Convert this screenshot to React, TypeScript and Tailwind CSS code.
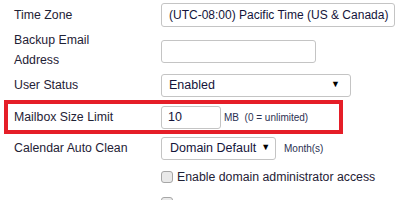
export default function App() {
  const font = { fontFamily: '"Liberation Sans", Arial, sans-serif' };
  return (
    <div style={font} className="w-[400px] h-[200px] overflow-hidden bg-white text-[12.3px] text-[#1f2236]">
      {/* Time Zone */}
      <div className="flex h-[30px] items-center pl-[14px]">
        <div className="w-[147px] shrink-0">Time Zone</div>
        <div className="flex h-[24px] w-[234px] shrink-0 items-center rounded-[3px] border border-[#c4c4c4] pl-[7px] text-[12px] text-[#14143a]">
          (UTC-08:00) Pacific Time (US &amp; Canada)
        </div>
      </div>

      {/* Backup Email */}
      <div className="flex h-[40px] items-center pl-[14px]">
        <div className="w-[147px] shrink-0 leading-[20px]">
          Backup Email
          <br />
          Address
        </div>
        <div className="mt-[2px] h-[23px] w-[155px] shrink-0 rounded-[3px] border border-[#c4c4c4]" />
      </div>

      {/* User Status */}
      <div className="flex h-[30px] items-center pl-[14px]">
        <div className="w-[147px] shrink-0">User Status</div>
        <div className="flex h-[23px] w-[190px] shrink-0 items-center justify-between rounded-[3px] border border-[#c4c4c4] pl-[7px] pr-[10px] text-[12.5px] text-[#14143a]">
          <span>Enabled</span>
          <span className="text-[9px] text-black">▼</span>
        </div>
      </div>

      {/* Mailbox Size Limit - highlighted */}
      <div className="ml-[4px] flex h-[34px] w-[339px] items-center border-4 border-[#e51e28] pl-[6px]">
        <div className="w-[147px] shrink-0">Mailbox Size Limit</div>
        <div className="flex h-[23px] w-[60px] shrink-0 items-center rounded-[3px] border border-[#c4c4c4] pl-[6px] text-[12.5px] text-[#14143a]">
          10
        </div>
        <span className="ml-[3px] whitespace-pre text-[10px] text-[#2b3152]">MB  (0 = unlimited)</span>
      </div>

      {/* Calendar Auto Clean */}
      <div className="flex h-[28px] items-center pl-[14px]">
        <div className="w-[147px] shrink-0">Calendar Auto Clean</div>
        <div className="flex h-[23px] w-[115px] shrink-0 items-center rounded-[3px] border border-[#c4c4c4] pl-[8px] text-[12.5px] text-[#14143a]">
          <span>Domain Default</span>
          <span className="ml-[5px] text-[9px] text-black">▼</span>
        </div>
        <span className="ml-[8px] text-[10px] text-[#2b3152]">Month(s)</span>
      </div>

      {/* Checkboxes */}
      <div className="flex h-[30px] items-center pl-[161px]">
        <div className="h-[12px] w-[12px] shrink-0 rounded-[3px] border border-[#a6a6a6] bg-[#e9e9e9]" />
        <span className="ml-[4px]">Enable domain administrator access</span>
      </div>
      <div className="flex h-[30px] items-start pl-[161px] pt-[5px]">
        <div className="h-[12px] w-[12px] shrink-0 rounded-[3px] border border-[#a6a6a6] bg-[#e9e9e9]" />
        <span className="ml-[4px] -mt-[1px]">Disable user login</span>
      </div>
    </div>
  );
}
